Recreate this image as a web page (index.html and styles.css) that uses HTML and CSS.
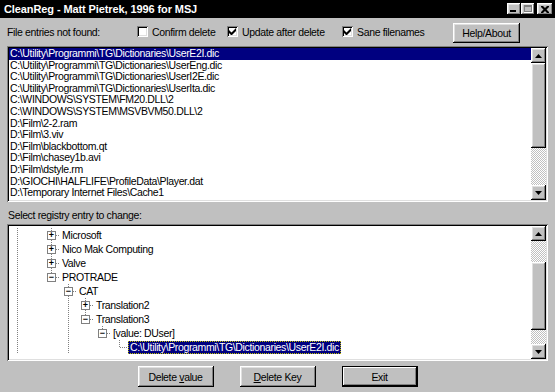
FILE: index.html
```html
<!DOCTYPE html>
<html lang="en">
<head>
    <meta charset="UTF-8">
    <title>CleanReg</title>
    <link rel="stylesheet" href="styles.css">
</head>
<body>

    <div class="window">
        <div class="titlebar">
            <span class="title">CleanReg - Matt Pietrek, 1996 for MSJ</span>
            <div class="caption-btns">
                <span class="cbtn raised"><svg width="6" height="2"><rect width="6" height="2" fill="#000"/></svg></span>
                <span class="cbtn raised max"><svg width="9" height="8"><rect x="0.5" y="0.5" width="8" height="7" fill="none" stroke="#fff"/><rect x="0" y="0" width="8" height="2" fill="#808080"/><rect x="0" y="0" width="1" height="7" fill="#808080"/><rect x="7" y="1" width="1" height="6" fill="#808080"/><rect x="0" y="6" width="8" height="1" fill="#808080"/></svg></span>
                <span class="cbtn raised close"><svg width="8" height="7"><path d="M0 0h2l2 2 2-2h2v1l-2.5 2.5L8 6v1H6L4 5 2 7H0V6l2.5-2.5L0 1z" fill="#000"/></svg></span>
            </div>
        </div>

        <div class="toprow">
            <span>File entries not found:</span>
            <label class="check"><span class="box"></span>Confirm delete</label>
            <label class="check"><span class="box"><svg width="7" height="7"><path d="M0 2v3l2 2h1l4-4V0L2.5 4.5z" fill="#000"/></svg></span>Update after delete</label>
            <label class="check"><span class="box"><svg width="7" height="7"><path d="M0 2v3l2 2h1l4-4V0L2.5 4.5z" fill="#000"/></svg></span>Sane filenames</label>
            <button class="btn raised">Help/About</button>
        </div>

        <div class="listbox sunken">
            <ul class="items">
                <li class="selected">C:\Utility\Programmi\TG\Dictionaries\UserE2I.dic</li>
                <li>C:\Utility\Programmi\TG\Dictionaries\UserEng.dic</li>
                <li>C:\Utility\Programmi\TG\Dictionaries\UserI2E.dic</li>
                <li>C:\Utility\Programmi\TG\Dictionaries\UserIta.dic</li>
                <li>C:\WINDOWS\SYSTEM\FM20.DLL\2</li>
                <li>C:\WINDOWS\SYSTEM\MSVBVM50.DLL\2</li>
                <li>D:\Film\2-2.ram</li>
                <li>D:\Film\3.viv</li>
                <li>D:\Film\blackbottom.qt</li>
                <li>D:\Film\chasey1b.avi</li>
                <li>D:\Film\dstyle.rm</li>
                <li>D:\GIOCHI\HALFLIFE\ProfileData\Player.dat</li>
                <li>D:\Temporary Internet Files\Cache1</li>
            </ul>
            <div class="scrollbar">
                <span class="arrow raised"><svg width="7" height="4"><path d="M3.5 0L7 4H0z" fill="#000"/></svg></span>
                <span class="thumb raised list-thumb"></span>
                <span class="track"></span>
                <span class="arrow raised"><svg width="7" height="4"><path d="M0 0h7L3.5 4z" fill="#000"/></svg></span>
            </div>
        </div>

        <div class="caption">Select registry entry to change:</div>

        <div class="treebox sunken">
            <div class="tree">
                <div class="row"><span class="g v"></span><span class="g"></span><span class="g t"><span class="exp">+</span></span><span class="name">Microsoft</span></div>
                <div class="row"><span class="g v"></span><span class="g"></span><span class="g t"><span class="exp">+</span></span><span class="name">Nico Mak Computing</span></div>
                <div class="row"><span class="g v"></span><span class="g"></span><span class="g t"><span class="exp">+</span></span><span class="name">Valve</span></div>
                <div class="row"><span class="g v"></span><span class="g"></span><span class="g l"><span class="exp">&minus;</span></span><span class="name">PROTRADE</span></div>
                <div class="row"><span class="g v"></span><span class="g"></span><span class="g"></span><span class="g t"><span class="exp">&minus;</span></span><span class="name">CAT</span></div>
                <div class="row"><span class="g v"></span><span class="g"></span><span class="g"></span><span class="g v"></span><span class="g t"><span class="exp">+</span></span><span class="name">Translation2</span></div>
                <div class="row"><span class="g v"></span><span class="g"></span><span class="g"></span><span class="g v"></span><span class="g l"><span class="exp">&minus;</span></span><span class="name">Translation3</span></div>
                <div class="row"><span class="g v"></span><span class="g"></span><span class="g"></span><span class="g v"></span><span class="g"></span><span class="g l"><span class="exp">&minus;</span></span><span class="name">[value: DUser]</span></div>
                <div class="row"><span class="g v"></span><span class="g"></span><span class="g"></span><span class="g v"></span><span class="g"></span><span class="g"></span><span class="g l"></span><span class="name selected">C:\Utility\Programmi\TG\Dictionaries\UserE2I.dic</span></div>
            </div>
            <div class="scrollbar">
                <span class="arrow raised"><svg width="7" height="4"><path d="M3.5 0L7 4H0z" fill="#000"/></svg></span>
                <span class="track tree-track1"></span>
                <span class="thumb raised tree-thumb"></span>
                <span class="track"></span>
                <span class="arrow raised"><svg width="7" height="4"><path d="M0 0h7L3.5 4z" fill="#000"/></svg></span>
            </div>
        </div>

        <div class="actions">
            <button class="btn raised wide">Delete <u>v</u>alue</button>
            <button class="btn raised wide"><u>D</u>elete Key</button>
            <button class="btn raised wide default">Exit</button>
        </div>
    </div>

</body>
</html>
```

FILE: styles.css
```css
body {
    margin: 0;
    font-family: 'Liberation Sans', Arial, sans-serif;
    font-size: 10.5px;
    letter-spacing: -0.35px;
    color: #000;
    background: #c0c0c0;
}

.window {
    width: 555px;
    height: 392px;
    background: #c0c0c0;
    display: flex;
    flex-direction: column;
    overflow: hidden;
}

.raised {
    background: #c0c0c0;
    box-shadow: inset -1px -1px #000, inset 1px 1px #fff, inset -2px -2px #808080, inset 2px 2px #dfdfdf;
}

.sunken {
    background: #fff;
    box-shadow: inset 1px 1px #808080, inset -1px -1px #fff, inset 2px 2px #000, inset -2px -2px #dfdfdf;
}

/* title bar */
.titlebar {
    height: 18px;
    background: #000;
    display: flex;
    align-items: center;
    justify-content: space-between;
    padding: 0 2px 0 4px;
}

.title {
    color: #fff;
    font-weight: bold;
    font-size: 11px;
    letter-spacing: -0.1px;
}

.caption-btns {
    display: flex;
    align-items: center;
}

.cbtn {
    width: 14px;
    height: 12px;
    display: flex;
    align-items: flex-end;
    justify-content: flex-start;
    padding: 0 0 3px 3px;
    box-sizing: border-box;
}

.cbtn.max {
    align-items: center;
    justify-content: center;
    padding: 0;
}

.cbtn.close {
    margin-left: 2px;
    width: 16px;
    align-items: center;
    justify-content: center;
    padding: 0;
}

/* top row */
.toprow {
    height: 28px;
    display: grid;
    grid-template-columns: 130px 90px 115px 111px 67px;
    align-items: center;
    padding-left: 7px;
}

.check {
    display: flex;
    align-items: center;
    gap: 4px;
}

.box {
    width: 11px;
    height: 11px;
    box-sizing: border-box;
    background: #fff;
    box-shadow: inset 1px 1px #808080, inset -1px -1px #fff, inset 2px 2px #000, inset -2px -2px #dfdfdf;
    display: flex;
    align-items: center;
    justify-content: center;
    margin-top: -1px;
}

.btn {
    font-family: inherit;
    font-size: 10.5px;
    letter-spacing: -0.35px;
    color: #000;
    border: none;
    height: 20px;
    padding: 0;
    margin-top: 1px;
}

/* file list */
.listbox {
    margin-left: 7px;
    width: 541px;
    height: 156px;
    box-sizing: border-box;
    padding: 2px;
    display: flex;
}

.items {
    flex: 1;
    list-style: none;
    margin: 0;
    padding: 0;
}

.items li {
    height: 11.6px;
    line-height: 11.6px;
    padding-left: 1px;
    white-space: nowrap;
}

.items li.selected {
    background: #000080;
    color: #fff;
}

.scrollbar {
    width: 15px;
    display: flex;
    flex-direction: column;
}

.arrow {
    height: 15px;
    display: flex;
    align-items: center;
    justify-content: center;
    flex-shrink: 0;
}

.track {
    flex: 1;
    background: repeating-conic-gradient(#c0c0c0 0 25%, #fff 0 50%) 0 0 / 2px 2px;
}

.list-thumb {
    height: 85px;
}

.tree-track1 {
    flex: none;
    height: 21px;
}

.tree-thumb {
    height: 68px;
}

.caption {
    height: 22px;
    padding: 7px 0 0 8px;
    box-sizing: border-box;
    line-height: 13px;
}

/* registry tree */
.treebox {
    margin-left: 7px;
    width: 541px;
    height: 137px;
    box-sizing: border-box;
    padding: 2px;
    display: flex;
}

.tree {
    flex: 1;
    padding-top: 2px;
}

.row {
    height: 14px;
    display: flex;
    align-items: center;
}

.g {
    width: 17px;
    height: 14px;
    flex-shrink: 0;
    display: flex;
    align-items: center;
    justify-content: center;
}

.g.v {
    background: repeating-linear-gradient(#808080 0 1px, transparent 1px 2px) 8px 0 / 1px 100% no-repeat;
}

.g.t {
    background:
        repeating-linear-gradient(#808080 0 1px, transparent 1px 2px) 8px 0 / 1px 100% no-repeat,
        repeating-linear-gradient(to right, #808080 0 1px, transparent 1px 2px) 9px 7px / 8px 1px no-repeat;
}

.g.l {
    background:
        repeating-linear-gradient(#808080 0 1px, transparent 1px 2px) 8px 0 / 1px 7px no-repeat,
        repeating-linear-gradient(to right, #808080 0 1px, transparent 1px 2px) 9px 7px / 8px 1px no-repeat;
}

.exp {
    width: 9px;
    height: 9px;
    box-sizing: border-box;
    border: 1px solid #808080;
    background: #fff;
    font-size: 9px;
    letter-spacing: 0;
    line-height: 6px;
    text-align: center;
    font-weight: bold;
    margin-top: 1px;
}

.name {
    padding: 0 2px;
    white-space: nowrap;
    line-height: 13px;
}

.name.selected {
    background: #000080;
    color: #fff;
    outline: 1px dotted #c0c000;
    outline-offset: -1px;
}

/* bottom buttons */
.actions {
    display: flex;
    justify-content: center;
    gap: 26px;
    padding-top: 5px;
}

.btn.wide {
    width: 76px;
    height: 21px;
    margin: 0;
}

.btn.default {
    box-shadow: inset 0 0 0 1px #000, inset -2px -2px #000, inset 2px 2px #fff, inset -3px -3px #808080;
}
```
